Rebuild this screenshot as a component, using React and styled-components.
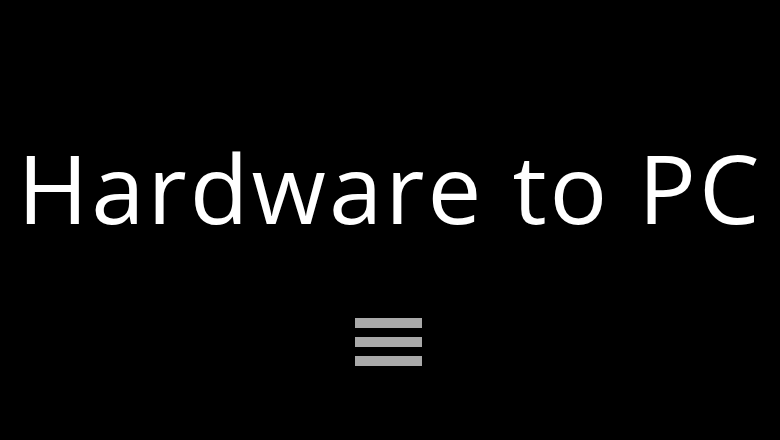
import React from "react";
import styled, { createGlobalStyle } from "styled-components";

const GlobalStyle = createGlobalStyle`
  html, body {
    margin: 0;
    padding: 0;
    background: #000;
  }
`;

const Screen = styled.div`
  width: 780px;
  height: 440px;
  background: #000;
  display: flex;
  flex-direction: column;
  align-items: center;
  padding-top: 129px;
  box-sizing: border-box;
  overflow: hidden;
`;

const Title = styled.h1`
  margin: 0;
  font-family: "Open Sans", "Noto Sans", sans-serif;
  font-weight: 400;
  font-size: 96px;
  line-height: 1.2;
  letter-spacing: 3px;
  color: #fff;
  white-space: nowrap;
`;

const MenuButton = styled.button`
  margin: 74px 0 0 -4px;
  padding: 0;
  border: none;
  background: transparent;
  display: flex;
  flex-direction: column;
  gap: 9px;
  cursor: pointer;
`;

const Bar = styled.span`
  display: block;
  width: 67px;
  height: 10px;
  background: #a9a9a9;
`;

export default function App() {
  return (
    <>
      <GlobalStyle />
      <Screen>
        <Title>Hardware to PC</Title>
        <MenuButton aria-label="Menu">
          <Bar />
          <Bar />
          <Bar />
        </MenuButton>
      </Screen>
    </>
  );
}
